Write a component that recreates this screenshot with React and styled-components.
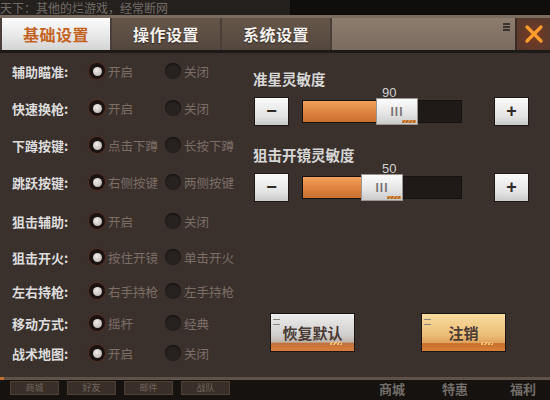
import React from "react";
import styled, { createGlobalStyle } from "styled-components";

const Global = createGlobalStyle`
  html, body { margin: 0; padding: 0; background: #141110; }
  body { font-family: "Noto Sans CJK SC", "Noto Sans", sans-serif; }
  * { box-sizing: border-box; }
`;

const Screen = styled.div`
  width: 550px;
  height: 400px;
  overflow: hidden;
  display: flex;
  flex-direction: column;
  background: #141110;
`;

const TopStrip = styled.div`
  height: 15px;
  display: flex;
  overflow: hidden;
`;

const TopLeft = styled.div`
  width: 290px;
  background: #2a2522;
  color: #8f8a85;
  font-size: 12px;
  line-height: 14px;
  padding: 1px 0 0 0;
  white-space: nowrap;
  opacity: 0.75;
`;

const TopRight = styled.div`
  flex: 1;
  background: #100e0d;
`;

const Panel = styled.div`
  display: flex;
  flex-direction: column;
  border-top: 3px solid #7b6c60;
  background: #3a312d;
`;

const TabBar = styled.div`
  height: 35px;
  display: flex;
  background: #4a3f38;
  border-bottom: 3px solid #1d1917;
  padding-left: 2px;
  gap: 2px;
`;

const Tab = styled.div`
  width: 108px;
  display: flex;
  align-items: center;
  justify-content: center;
  font-size: 16px;
  font-weight: 700;
  letter-spacing: 0.5px;
  color: ${(p) => (p.$active ? "#c4631f" : "#f2efec")};
  background: ${(p) =>
    p.$active
      ? "linear-gradient(#fbfbfb, #e6e6e6 60%, #d4d4d4)"
      : "linear-gradient(#665649, #54473e)"};
  text-shadow: ${(p) => (p.$active ? "none" : "0 1px 1px #2a211c")};
`;

const Filler = styled.div`
  flex: 1;
  background: linear-gradient(#8d7d6f, #7a6b5f);
  display: flex;
  justify-content: flex-end;
  padding: 5px 5px 0 0;
`;

const MenuLines = styled.div`
  width: 7px;
  height: 8px;
  display: flex;
  flex-direction: column;
  justify-content: space-between;
  & > span {
    height: 2px;
    background: #3a3430;
  }
`;

const Close = styled.div`
  width: 35px;
  display: flex;
  align-items: center;
  justify-content: center;
  margin-left: -2px;
  background: radial-gradient(circle at 50% 55%, #7a3a22, #5a3a2c 70%);
  border-left: 2px solid #3a2c25;
`;

const Body = styled.div`
  height: 324px;
  display: flex;
  background: #3a312d;
`;

const Options = styled.div`
  width: 252px;
  padding-left: 12px;
  display: flex;
  flex-direction: column;
`;

const Row = styled.div`
  height: 20px;
  margin-top: ${(p) => p.$mt}px;
  display: grid;
  grid-template-columns: 77px 76px 1fr;
  align-items: center;
`;

const Label = styled.div`
  font-size: 13px;
  font-weight: 700;
  color: #dcdcdc;
  white-space: nowrap;
`;

const Option = styled.div`
  display: flex;
  align-items: center;
  gap: 3px;
  font-size: 12.5px;
  color: #7c6d65;
  white-space: nowrap;
`;

const Dot = styled.span`
  position: relative;
  width: 16px;
  height: 16px;
  border-radius: 50%;
  flex: none;
  background: ${(p) => (p.$on ? "#1a1311" : "#272120")};
  box-shadow: ${(p) =>
    p.$on
      ? "0 0 2px 1px rgba(110,40,20,0.55)"
      : "inset 0 1px 2px rgba(0,0,0,0.6)"};
  &::after {
    content: "";
    display: ${(p) => (p.$on ? "block" : "none")};
    position: absolute;
    left: 4px;
    top: 4px;
    width: 9px;
    height: 9px;
    border-radius: 50%;
    background: radial-gradient(circle at 40% 35%, #f0ecea, #b3aba7);
  }
`;

const Right = styled.div`
  flex: 1;
  padding: 18px 0 0 1px;
  display: flex;
  flex-direction: column;
`;

const Slider = styled.div`
  display: flex;
  flex-direction: column;
  margin-top: ${(p) => p.$mt}px;
`;

const SliderTitle = styled.div`
  font-size: 14.5px;
  font-weight: 700;
  line-height: 16px;
  color: #d6d6d6;
`;

const ValueText = styled.div`
  font-family: "Liberation Sans", Arial, sans-serif;
  font-size: 13px;
  line-height: 12px;
  color: #cfcfcf;
  margin: 0 0 0 129px;
`;

const SliderRow = styled.div`
  display: flex;
  align-items: center;
  height: 29px;
  margin-top: -2px;
`;

const StepButton = styled.div`
  width: 35px;
  height: 29px;
  margin-left: ${(p) => p.$ml}px;
  display: flex;
  align-items: center;
  justify-content: center;
  background: linear-gradient(#fafafa, #e2e2e2 70%, #c9c9c9);
  border: 1px solid #1e1916;
  font-family: "Liberation Sans", Arial, sans-serif;
  font-size: 18px;
  font-weight: 900;
  color: #2f2a28;
`;

const Track = styled.div`
  position: relative;
  width: 160px;
  height: 23px;
  margin-left: 13px;
  background: #1f1a18;
  border: 1px solid #161210;
`;

const Fill = styled.div`
  height: 100%;
  background: linear-gradient(#f0a15c, #df8540 50%, #c86f2e);
`;

const Thumb = styled.div`
  position: absolute;
  top: -3px;
  width: 42px;
  height: 27px;
  display: flex;
  align-items: center;
  justify-content: center;
  background: linear-gradient(#fcfcfc, #e4e4e4 60%, #cbcbcb);
  border: 1px solid #9a9590;
  font-family: "Liberation Sans", Arial, sans-serif;
  font-size: 12px;
  font-weight: 700;
  letter-spacing: 1px;
  color: #7a7573;
`;

const Stripes = styled.span`
  position: absolute;
  right: 1px;
  bottom: 1px;
  width: 14px;
  height: 3px;
  background: repeating-linear-gradient(
    -60deg,
    #e08a3e 0 2px,
    #9a6a40 2px 3px
  );
`;

const Actions = styled.div`
  display: flex;
  gap: 66px;
  padding-left: 17px;
  margin-top: 111px;
`;

const ActionButton = styled.div`
  position: relative;
  width: 85px;
  height: 39px;
  display: flex;
  align-items: center;
  justify-content: center;
  border: 1px solid #1b1613;
  font-size: 15px;
  font-weight: 700;
  color: #4a3b35;
  background: ${(p) =>
    p.$gold
      ? "linear-gradient(#f7dc9f, #ecbf78 55%, #e0a35c 78%, #c96e2c 80%, #d77f38)"
      : "linear-gradient(#ececec, #d2d0ce 55%, #bfb4ab 76%, #c2703a 79%, #d77e3a)"};
  &::before {
    content: "";
    position: absolute;
    left: 2px;
    top: 5px;
    width: 7px;
    height: 4px;
    border-top: 1px solid #8a8480;
    border-bottom: 1px solid #8a8480;
  }
`;

const ActionStripes = styled.span`
  position: absolute;
  right: 12px;
  bottom: 6px;
  width: 12px;
  height: 3px;
  background: repeating-linear-gradient(
    -60deg,
    #f0c070 0 2px,
    transparent 2px 3px
  );
`;

const BottomEdge = styled.div`
  height: 3px;
  background: linear-gradient(90deg, #c27030 0 4px, #5f5248 4px);
`;

const Dock = styled.div`
  flex: 1;
  display: flex;
  align-items: flex-start;
  padding: 1px 0 0 10px;
  gap: 8px;
  background: #151210;
`;

const DockButton = styled.div`
  width: 49px;
  height: 14px;
  background: #3a2f28;
  border: 1px solid #4c3f36;
  font-size: 9px;
  line-height: 12px;
  color: #6f665f;
  text-align: center;
`;

const DockSpacer = styled.div`
  flex: 1;
`;

const DockText = styled.div`
  width: ${(p) => p.$w}px;
  font-size: 13px;
  font-weight: 700;
  line-height: 16px;
  color: #bdb6b0;
  opacity: 0.55;
  white-space: nowrap;
`;

const rows = [
  ["辅助瞄准:", "开启", "关闭", 8],
  ["快速换枪:", "开启", "关闭", 17],
  ["下蹲按键:", "点击下蹲", "长按下蹲", 17],
  ["跳跃按键:", "右侧按键", "两侧按键", 17],
  ["狙击辅助:", "开启", "关闭", 19],
  ["狙击开火:", "按住开镜", "单击开火", 16],
  ["左右持枪:", "右手持枪", "左手持枪", 14],
  ["移动方式:", "摇杆", "经典", 12],
  ["战术地图:", "开启", "关闭", 10],
];

const sliders = [
  { title: "准星灵敏度", value: 90, thumb: 73, mt: 0 },
  { title: "狙击开镜灵敏度", value: 50, thumb: 58, mt: 21 },
];

export default function App() {
  return (
    <Screen>
      <Global />
      <TopStrip>
        <TopLeft>天下：其他的烂游戏，经常断网</TopLeft>
        <TopRight />
      </TopStrip>
      <Panel>
        <TabBar>
          <Tab $active>基础设置</Tab>
          <Tab>操作设置</Tab>
          <Tab>系统设置</Tab>
          <Filler>
            <MenuLines>
              <span />
              <span />
              <span />
            </MenuLines>
          </Filler>
          <Close>
            <svg width="20" height="20" viewBox="0 0 20 20">
              <path
                d="M3 3 L17 17 M17 3 L3 17"
                stroke="#ff9d2c"
                strokeWidth="3.2"
                strokeLinecap="round"
              />
            </svg>
          </Close>
        </TabBar>
        <Body>
          <Options>
            {rows.map(([label, a, b, mt]) => (
              <Row key={label} $mt={mt}>
                <Label>{label}</Label>
                <Option>
                  <Dot $on />
                  {a}
                </Option>
                <Option>
                  <Dot />
                  {b}
                </Option>
              </Row>
            ))}
          </Options>
          <Right>
            {sliders.map((s) => (
              <Slider key={s.title} $mt={s.mt}>
                <SliderTitle>{s.title}</SliderTitle>
                <ValueText>{s.value}</ValueText>
                <SliderRow>
                  <StepButton $ml={1}>−</StepButton>
                  <Track>
                    <Fill style={{ width: s.thumb + 1 }} />
                    <Thumb style={{ left: s.thumb }}>
                      III
                      <Stripes />
                    </Thumb>
                  </Track>
                  <StepButton $ml={32}>+</StepButton>
                </SliderRow>
              </Slider>
            ))}
            <Actions>
              <ActionButton>
                恢复默认
                <ActionStripes />
              </ActionButton>
              <ActionButton $gold>
                注销
                <ActionStripes />
              </ActionButton>
            </Actions>
          </Right>
        </Body>
        <BottomEdge />
      </Panel>
      <Dock>
        <DockButton>商城</DockButton>
        <DockButton>好友</DockButton>
        <DockButton>邮件</DockButton>
        <DockButton>战队</DockButton>
        <DockSpacer />
        <DockText $w={55}>商城</DockText>
        <DockText $w={60}>特惠</DockText>
        <DockText $w={40}>福利</DockText>
      </Dock>
    </Screen>
  );
}
